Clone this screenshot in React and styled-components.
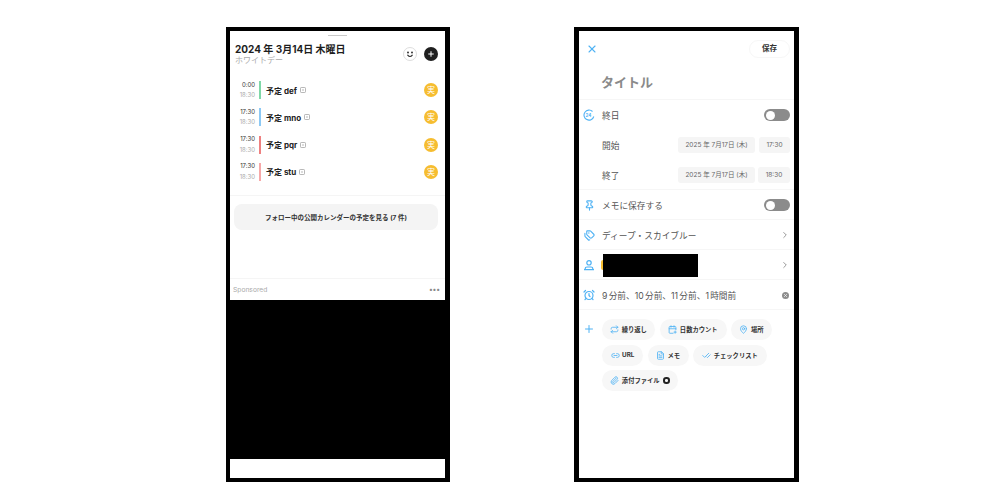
import React from "react";
import styled, { createGlobalStyle } from "styled-components";
import {
  X,
  Plus,
  Pin,
  Tags,
  AlarmClock,
  ChevronRight,
  Repeat,
  CalendarPlus,
  MapPin,
  Link2,
  FileText,
  CheckCheck,
  Paperclip,
} from "lucide-react";

const BLUE = "#4fb2f4";

const GlobalStyle = createGlobalStyle`
  html, body {
    margin: 0;
    padding: 0;
    background: #fff;
  }
  body {
    font-family: "Inter", "Noto Sans CJK JP", sans-serif;
    color: #222;
  }
`;

const Page = styled.div`
  width: 1000px;
  height: 500px;
  box-sizing: border-box;
  padding: 27px 0 0 226px;
  display: flex;
  gap: 124px;
  overflow: hidden;
`;

const Phone = styled.div`
  width: 215px;
  height: 447px;
  border: solid #000;
  border-width: 4px 5px 4px ${(p) => p.$edge}px;
  background: #fff;
  display: flex;
  flex-direction: column;
  overflow: hidden;
`;

/* calendar sheet */
const Sheet = styled.div`
  height: 269px;
  display: flex;
  flex-direction: column;
`;

const Handle = styled.div`
  width: 19px;
  height: 1px;
  margin: 4px auto 0;
  background: #c9c9c9;
`;

const DayHeader = styled.div`
  display: flex;
  align-items: center;
  justify-content: space-between;
  padding: 7px 7px 0 5px;
`;

const DayTitle = styled.div`
  font-size: 10px;
  line-height: 13px;
  font-weight: 700;
  color: #1e1e1e;
`;

const DaySub = styled.div`
  font-size: 8px;
  line-height: 9px;
  color: #aaa;
`;

const HeaderActions = styled.div`
  display: flex;
  align-items: center;
  gap: 7px;
`;

const RoundButton = styled.div`
  width: 14px;
  height: 14px;
  border-radius: 50%;
  background: #1f1f1f;
  color: #fff;
  display: flex;
  align-items: center;
  justify-content: center;
`;

const FaceButton = styled(RoundButton)`
  background: #fff;
  box-sizing: border-box;
  border: 1px solid #ddd;
  color: #222;
`;

const EventList = styled.div`
  margin-top: 16px;
  padding: 0 7px 0 0;
  display: flex;
  flex-direction: column;
  gap: 9.3px;
`;

const EventRow = styled.div`
  height: 18px;
  display: flex;
  align-items: center;
`;

const Times = styled.div`
  width: 25px;
  font-size: 6px;
  line-height: 10.5px;
  text-align: right;
  color: #333;
  flex: none;
`;

const EndTime = styled.div`
  color: #aaa;
`;

const EventBar = styled.div`
  width: 2px;
  height: 18px;
  margin: 0 5px 0 4px;
  background: ${(p) => p.$color};
  flex: none;
`;

const EventName = styled.div`
  font-size: 8px;
  font-weight: 700;
  color: #222;
`;

const Memo = styled.svg`
  width: 6px;
  height: 6px;
  margin-left: 3px;
  color: #999;
`;

const Badge = styled.div`
  margin-left: auto;
  width: 14px;
  height: 14px;
  border-radius: 50%;
  background: #f6bd30;
  color: #fff;
  font-size: 8px;
  line-height: 14px;
  text-align: center;
`;

const SectionRule = styled.div`
  height: 1px;
  margin-top: 14px;
  background: #f5f5f5;
  flex: none;
`;

const FollowButton = styled.div`
  margin: 8px 7px auto 4px;
  height: 26px;
  border-radius: 8px;
  background: #f4f4f4;
  font-size: 6.5px;
  font-weight: 700;
  color: #333;
  display: flex;
  align-items: center;
  justify-content: center;
`;

const SponsorBar = styled.div`
  height: 21px;
  border-top: 1px solid #f5f5f5;
  padding: 0 5px 0 3px;
  display: flex;
  align-items: center;
  justify-content: space-between;
  font-size: 6.7px;
  color: #aaa;
`;

const More = styled.span`
  font-size: 7px;
  font-weight: 700;
  letter-spacing: 0.3px;
  color: #888;
`;

const AdBlock = styled.div`
  height: 159px;
  background: #000;
  flex: none;
`;

/* edit form */
const TopBar = styled.div`
  height: 36px;
  padding: 0 4px 0 7px;
  display: flex;
  align-items: center;
  justify-content: space-between;
  color: ${BLUE};
`;

const SaveButton = styled.div`
  box-sizing: border-box;
  width: 41px;
  height: 18px;
  border: 1px solid #f7f7f7;
  border-radius: 9px;
  font-size: 7.5px;
  font-weight: 700;
  line-height: 16px;
  text-align: center;
  color: #333;
`;

const TitleField = styled.div`
  height: 31px;
  padding: 1px 0 0 22px;
  border-bottom: 1px solid #f6f6f6;
  font-size: 13px;
  line-height: 29px;
  font-weight: 700;
  color: #8a8a8a;
`;

const Row = styled.div`
  height: 30px;
  box-sizing: border-box;
  padding: ${(p) => (p.$rule ? "1px" : "0")} 4px 0 4px;
  display: flex;
  align-items: center;
  font-size: 8.7px;
  color: #555;
  border-bottom: ${(p) => (p.$rule ? "1px solid #f6f6f6" : "none")};
`;

const RowIcon = styled.div`
  width: 12px;
  height: 12px;
  margin-right: 7px;
  color: ${BLUE};
  display: flex;
  align-items: center;
  justify-content: center;
  flex: none;
`;

const Toggle = styled.div`
  margin-left: auto;
  width: 26px;
  height: 12px;
  border-radius: 6px;
  background: #8b8b8b;
  display: flex;
  align-items: center;
  padding-left: 2px;
  box-sizing: border-box;
`;

const Knob = styled.div`
  width: 9px;
  height: 9px;
  border-radius: 50%;
  background: #fff;
`;

const TimeChip = styled.div`
  width: ${(p) => p.$w}px;
  height: 16px;
  margin-left: ${(p) => p.$gap}px;
  border-radius: 3px;
  background: #f5f5f5;
  font-size: 6.5px;
  line-height: 16px;
  text-align: center;
  color: #666;
`;

const Spacer = styled.div`
  margin-right: auto;
`;

const AvatarEdge = styled.div`
  width: 2px;
  height: 10px;
  margin-left: -1px;
  border-radius: 2px 0 0 2px;
  background: #f6bd30;
  flex: none;
`;

const Redacted = styled.div`
  width: 95px;
  height: 23px;
  background: #000;
`;

const Chevron = styled.div`
  margin-left: auto;
  color: #999;
  display: flex;
`;

const Reminder = styled.span`
  word-spacing: -1.2px;
`;

const ClearDot = styled.div`
  margin-left: auto;
  margin-right: 1px;
  width: 7px;
  height: 7px;
  border-radius: 50%;
  background: #8d8d8d;
  color: #fff;
  display: flex;
  align-items: center;
  justify-content: center;
`;

const AddArea = styled.div`
  display: flex;
  padding: 9px 0 0 4px;
`;

const AddIcon = styled.div`
  width: 12px;
  height: 12px;
  margin-right: 7px;
  color: ${BLUE};
  flex: none;
`;

const ChipRows = styled.div`
  display: flex;
  flex-direction: column;
  gap: 4.5px;
`;

const ChipRow = styled.div`
  display: flex;
  gap: 4.5px;
`;

const Chip = styled.div`
  height: 21px;
  width: ${(p) => p.$w}px;
  border-radius: 10.5px;
  background: #f7f7f7;
  display: flex;
  align-items: center;
  justify-content: center;
  gap: 2.5px;
  font-size: 6.3px;
  font-weight: 700;
  color: #333;
  svg {
    color: ${BLUE};
    flex: none;
  }
`;

const ProMark = styled.span`
  width: 6.5px;
  height: 6.5px;
  margin-left: 1px;
  border-radius: 50%;
  border: 2px solid #222;
  box-sizing: border-box;
`;

const events = [
  { start: "0:00", end: "18:30", name: "予定 def", color: "#7fd8a8" },
  { start: "17:30", end: "18:30", name: "予定 mno", color: "#8cc9f5" },
  { start: "17:30", end: "18:30", name: "予定 pqr", color: "#ee8080" },
  { start: "17:30", end: "18:30", name: "予定 stu", color: "#f7a8a8" },
];

const chipRows = [
  [
    { w: 53, label: "繰り返し", Icon: Repeat },
    { w: 67, label: "日数カウント", Icon: CalendarPlus },
    { w: 41, label: "場所", Icon: MapPin },
  ],
  [
    { w: 41, label: "URL", Icon: Link2 },
    { w: 41, label: "メモ", Icon: FileText },
    { w: 74, label: "チェックリスト", Icon: CheckCheck },
  ],
  [{ w: 76, label: "添付ファイル", Icon: Paperclip, pro: true }],
];

const App = () => (
  <>
    <GlobalStyle />
    <Page>
      <Phone $edge={4}>
        <Sheet>
          <Handle />
          <DayHeader>
            <div>
              <DayTitle>2024 年 3月14日 木曜日</DayTitle>
              <DaySub>ホワイトデー</DaySub>
            </div>
            <HeaderActions>
              <FaceButton>
                <svg width="10" height="10" viewBox="0 0 10 10" fill="none" stroke="currentColor">
                  <circle cx="3" cy="3.5" r="0.9" fill="currentColor" stroke="none" />
                  <circle cx="7" cy="3.5" r="0.9" fill="currentColor" stroke="none" />
                  <path d="M2.5 5.8C3.5 8 6.5 8 7.5 5.8" strokeWidth="1.1" />
                </svg>
              </FaceButton>
              <RoundButton>
                <Plus size={8} strokeWidth={3} />
              </RoundButton>
            </HeaderActions>
          </DayHeader>
          <EventList>
            {events.map((ev) => (
              <EventRow key={ev.name}>
                <Times>
                  <div>{ev.start}</div>
                  <EndTime>{ev.end}</EndTime>
                </Times>
                <EventBar $color={ev.color} />
                <EventName>{ev.name}</EventName>
                <Memo viewBox="0 0 6 6" fill="none" stroke="currentColor" strokeWidth="0.7">
                  <rect x="0.5" y="0.5" width="5" height="5" rx="0.8" />
                  <path d="M2 3h2" />
                </Memo>
                <Badge>実</Badge>
              </EventRow>
            ))}
          </EventList>
          <SectionRule />
          <FollowButton>フォロー中の公開カレンダーの予定を見る (7 件)</FollowButton>
          <SponsorBar>
            Sponsored
            <More>•••</More>
          </SponsorBar>
        </Sheet>
        <AdBlock />
      </Phone>

      <Phone $edge={5}>
        <TopBar>
          <X size={12} strokeWidth={2.2} />
          <SaveButton>保存</SaveButton>
        </TopBar>
        <TitleField>タイトル</TitleField>
        <Row>
          <RowIcon>
            <svg width="12" height="12" viewBox="0 0 12 12" fill="none" stroke="currentColor">
              <path d="M10.8 7.5A5 5 0 1 1 9.5 2.5" strokeWidth="1.1" />
              <text x="2.4" y="7.8" fontSize="4.5" fontWeight="700" fill="currentColor" stroke="none">
                24
              </text>
            </svg>
          </RowIcon>
          終日
          <Toggle>
            <Knob />
          </Toggle>
        </Row>
        <Row>
          <RowIcon />
          開始
          <Spacer />
          <TimeChip $w={77} $gap={0}>2025 年 7月17日 (木)</TimeChip>
          <TimeChip $w={31} $gap={4}>17:30</TimeChip>
        </Row>
        <Row $rule>
          <RowIcon />
          終了
          <Spacer />
          <TimeChip $w={77} $gap={0}>2025 年 7月17日 (木)</TimeChip>
          <TimeChip $w={32} $gap={3}>18:30</TimeChip>
        </Row>
        <Row $rule>
          <RowIcon>
            <Pin size={11} strokeWidth={2.4} />
          </RowIcon>
          メモに保存する
          <Toggle>
            <Knob />
          </Toggle>
        </Row>
        <Row $rule>
          <RowIcon>
            <Tags size={11} strokeWidth={2.4} />
          </RowIcon>
          ディープ・スカイブルー
          <Chevron>
            <ChevronRight size={10} strokeWidth={2.4} />
          </Chevron>
        </Row>
        <Row $rule>
          <RowIcon>
            <svg width="12" height="12" viewBox="0 0 12 12" fill="none" stroke="currentColor" strokeWidth="1.2">
              <circle cx="6" cy="3.8" r="2.2" />
              <path d="M2.2 10.6V9.6C2.2 8.6 3 8 4 8H8C9 8 9.8 8.6 9.8 9.6V10.6ZM1 10.6H11" />
            </svg>
          </RowIcon>
          <AvatarEdge />
          <Redacted />
          <Chevron>
            <ChevronRight size={10} strokeWidth={2.4} />
          </Chevron>
        </Row>
        <Row $rule>
          <RowIcon>
            <AlarmClock size={12} strokeWidth={2.4} />
          </RowIcon>
          <Reminder>9 分前、10 分前、11 分前、1 時間前</Reminder>
          <ClearDot>
            <X size={5} strokeWidth={3} />
          </ClearDot>
        </Row>
        <AddArea>
          <AddIcon>
            <Plus size={12} strokeWidth={2} />
          </AddIcon>
          <ChipRows>
            {chipRows.map((row, i) => (
              <ChipRow key={i}>
                {row.map(({ w, label, Icon, pro }) => (
                  <Chip key={label} $w={w}>
                    <Icon size={9} strokeWidth={2.2} />
                    {label}
                    {pro && <ProMark />}
                  </Chip>
                ))}
              </ChipRow>
            ))}
          </ChipRows>
        </AddArea>
      </Phone>
    </Page>
  </>
);

export default App;
